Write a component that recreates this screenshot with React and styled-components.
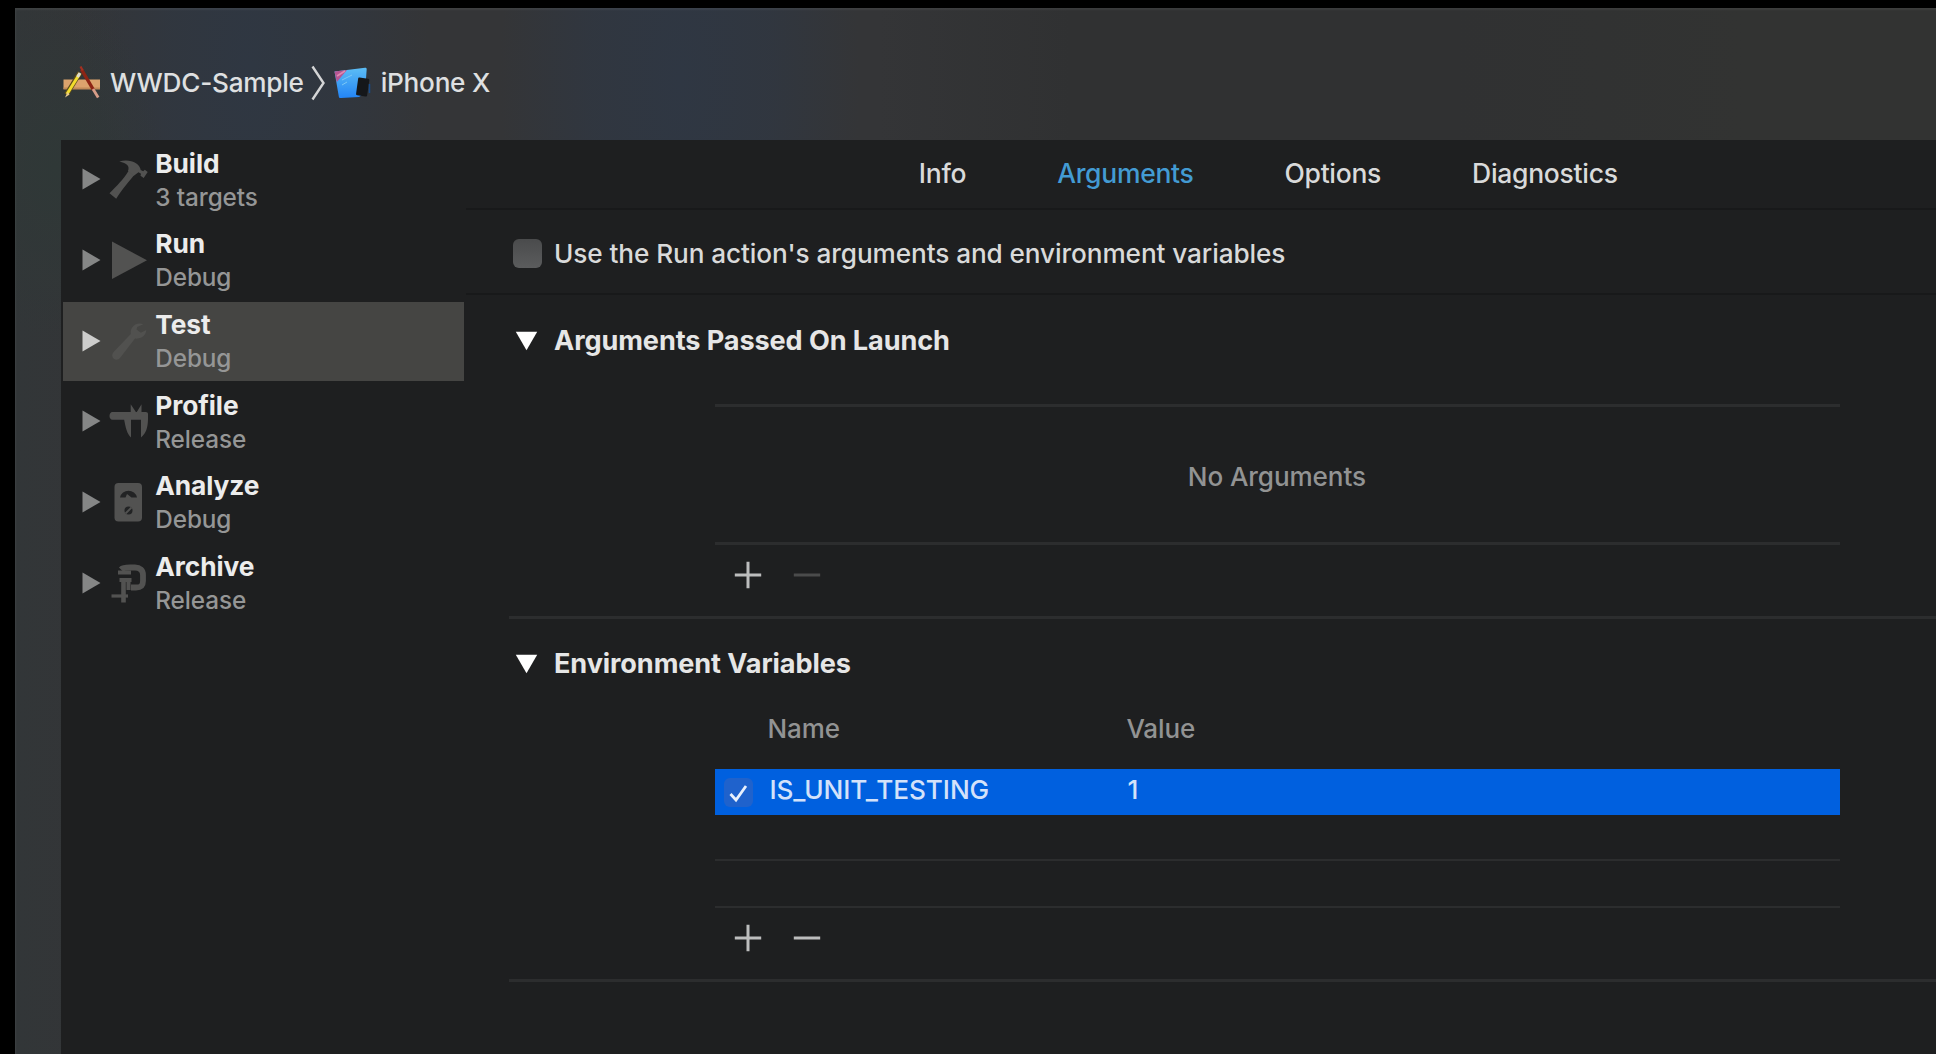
import React from "react";
import styled, { createGlobalStyle } from "styled-components";

const Global = createGlobalStyle`
  * { box-sizing: border-box; }
  body {
    margin: 0;
    background: #000;
    overflow: hidden;
    font-family: Inter, "Liberation Sans", sans-serif;
    font-weight: 500;
    letter-spacing: -0.006em;
  }
`;

const Screen = styled.div`
  width: 1936px;
  height: 1054px;
  padding: 8px 0 0 15px;
  background: #000;
`;

const SchemeWindow = styled.div`
  display: flex;
  flex-direction: column;
  height: 100%;
  box-shadow: inset 1px 2px 2px rgba(255, 255, 255, 0.06);
  background:
    radial-gradient(ellipse 110px 170px at 40px 160px, #2f3837, rgba(47, 56, 55, 0) 100%),
    radial-gradient(ellipse 180px 460px at 235px 60px, #2f3742, rgba(47, 55, 66, 0.7) 45%, rgba(47, 55, 66, 0) 100%),
    radial-gradient(ellipse 180px 460px at 665px 70px, #2f3743, rgba(47, 55, 67, 0.7) 50%, rgba(47, 55, 67, 0) 100%),
    linear-gradient(to right, #323638, #343537 6%, #343537 45%, #303132 55%, #303132 75%, #323332 90%, #323332);
`;

const Breadcrumb = styled.header`
  flex: none;
  display: flex;
  align-items: center;
  height: 132px;
  padding: 17px 0 0 48px;
`;

const Crumb = styled.span`
  margin-left: ${(p) => p.$gap}px;
  font-size: 26.2px;
  line-height: 34px;
  letter-spacing: -0.01em;
  color: #dfe0e1;
  white-space: nowrap;
`;

const CrumbChevron = styled.svg`
  width: 16px;
  height: 36px;
  margin: 0 8px 0 6px;
`;

const Body = styled.div`
  flex: 1;
  display: flex;
  min-height: 0;
  margin-left: 46px;
  background: #1e1f20;
`;

const Sidebar = styled.nav`
  flex: none;
  display: flex;
  flex-direction: column;
  gap: 1.7px;
  width: 405px;
  padding: 1px 2px 0;
`;

const Action = styled.div`
  display: flex;
  height: 79px;
  padding-left: 19px;
  background: ${(p) => (p.$selected ? "#454543" : "transparent")};
`;

const Disclosure = styled.svg`
  flex: none;
  width: 19px;
  height: 22px;
  margin-top: 27.2px;
  fill: ${(p) => (p.$selected ? "#cdcdcc" : "#858686")};
`;

const ActionIcon = styled.svg`
  flex: none;
  width: 40px;
  height: 40px;
  margin: 18.4px 0 0 7.3px;
  color: ${(p) => (p.$selected ? "#51514f" : "#525251")};
`;

const ActionText = styled.div`
  display: flex;
  flex-direction: column;
  padding: 5.5px 0 0 7px;
`;

const ActionName = styled.strong`
  font-size: 26.3px;
  line-height: 33px;
  font-weight: 650;
  color: #ececec;
`;

const ActionConfig = styled.span`
  font-size: 24.3px;
  line-height: 35px;
  color: #959696;
`;

const Main = styled.main`
  flex: 1;
  display: flex;
  flex-direction: column;
  min-width: 0;
`;

const Tabs = styled.div`
  display: flex;
  align-items: center;
  gap: 91px;
  height: 70px;
  padding: 0 0 2.5px 452.8px;
  border-bottom: 2px solid #18191a;
`;

const Tab = styled.span`
  font-size: 26.5px;
  line-height: 34px;
  letter-spacing: -0.011em;
  color: ${(p) => (p.$active ? "#439bd3" : "#d9dada")};
`;

const InheritRow = styled.label`
  display: flex;
  align-items: center;
  gap: 12px;
  height: 85px;
  padding: 4px 0 0 47px;
  border-bottom: 2px solid #18191a;
  font-size: 26.2px;
  line-height: 34px;
  color: #d9dada;
`;

const Checkbox = styled.span`
  display: flex;
  align-items: center;
  justify-content: center;
  flex: none;
  width: 29px;
  height: 29px;
  border-radius: 6px;
  background: ${(p) => (p.$checked ? "#1f62cc" : "linear-gradient(#4a4b4c, #5b5c5d)")};
`;

const Section = styled.section`
  display: flex;
  flex-direction: column;
  margin-left: 43px;
  border-bottom: 3px solid #2c2d2e;
`;

const SectionTitle = styled.h2`
  display: flex;
  align-items: center;
  gap: 16px;
  margin: 0;
  padding: ${(p) => p.$top}px 0 0 6px;
  font-size: 27.1px;
  line-height: 34px;
  font-weight: 650;
  color: #e6e6e6;
`;

const Triangle = styled.svg`
  width: 23px;
  height: 20px;
  fill: #fff;
`;

const Table = styled.div`
  display: flex;
  flex-direction: column;
  width: 1125px;
  margin-left: 206.4px;
`;

const EmptyTable = styled(Table)`
  align-items: center;
  justify-content: center;
  height: 141px;
  margin-top: 46px;
  padding: 3px 2px 0 0;
  border: solid #2c2d2e;
  border-width: 3px 0;
  font-size: 26.1px;
  color: #929393;
`;

const columns = `
  display: grid;
  grid-template-columns: 8.5px 43.5px 359px 1fr;
  align-items: center;
`;

const HeadRow = styled.div`
  ${columns}
  height: 88px;
  padding-top: 7px;
  font-size: 26px;
  line-height: 34px;
  color: #929393;
`;

const VariableRow = styled.div`
  ${columns}
  height: 46px;
  background: #0060df;
  font-size: 26.2px;
  line-height: 34px;
  color: #d3e2fa;
`;

const Cell = styled.span`
  grid-column: ${(p) => p.$column};
  padding: 0 0 ${(p) => (p.$raised ? 4 : 0)}px ${(p) => p.$inset || 0}px;
`;

const CheckCell = styled.span`
  grid-column: 2;
`;

const BlankRow = styled.div`
  height: ${(p) => p.$height}px;
  border-bottom: 2px solid #2c2d2e;
`;

const Tools = styled.div`
  display: flex;
  align-items: center;
  gap: 31px;
  height: 71px;
  margin-left: 225px;
  padding-bottom: 12px;
`;

const ToolIcon = styled.svg`
  width: 28px;
  height: 28px;
  stroke: ${(p) => (p.$disabled ? "#4a4b4b" : "#bcbdbd")};
  stroke-width: 3;
`;

const Plus = () => (
  <ToolIcon viewBox="0 0 28 28"><path d="M.8 14h26.4M14 .8v26.4" /></ToolIcon>
);
const Minus = ({ disabled }) => (
  <ToolIcon viewBox="0 0 28 28" $disabled={disabled}><path d="M.8 14h26.4" /></ToolIcon>
);

const ProjectIcon = () => (
  <svg width="38" height="34" viewBox="0 0 38 34">
    <path d="M.5 13.500h36.500v9.500h-36.500z" fill="#dca36d" />
    <path d="M.5 21.500h36.500v2h-36.500z" fill="#c08a58" />
    <path d="M17 6.500 3.500 28.500" stroke="#5d4c1c" strokeWidth="5" />
    <path d="M16.500 8 4 28" stroke="#f2dc2c" strokeWidth="3" />
    <path d="m14.500 11 2.500-4" stroke="#dddacb" strokeWidth="3" />
    <path d="m4.500 26-2.500 5.500 4.500-3z" fill="#e8c98d" />
    <path d="m18.500 3.500 12 20.500" stroke="#8d2414" strokeWidth="3.400" />
    <path d="m17.500 .5 2.200 4" stroke="#a53020" strokeWidth="2.200" />
    <path d="m30 23 5.200 8.500" stroke="#d69c88" strokeWidth="2.800" />
  </svg>
);

const DeviceIcon = () => (
  <svg width="37" height="32" viewBox="0 0 37 32">
    <defs>
      <linearGradient id="screen" x1="0" y1="0" x2="0" y2="1">
        <stop offset="0" stopColor="#5cbdf5" />
        <stop offset="1" stopColor="#2384f5" />
      </linearGradient>
    </defs>
    <path d="M.5 4.500 31 .8c1-.1 1.600.4 1.700 1.300L31 26 25 30 7 31c-1.500.1-2-.4-2.200-1.500z" fill="url(#screen)" />
    <path d="M.5 4.500 13 3 2.800 15z" fill="#b55592" />
    <path d="m3 9 8-5" stroke="#dd8bb0" strokeWidth="1.500" />
    <path d="m8 13 10-5M8 18l5-3" stroke="#7cc8f5" strokeWidth="1" />
    <path d="m25.500 10.500 8.500 1.200c1 .2 1.400.8 1.300 1.700l-2.100 14.500c-.2 1.200-.8 1.700-1.900 1.500l-8-1.200c-1-.2-1.400-.8-1.200-1.800l2-14.500c.1-1 .600-1.500 1.400-1.400z" fill="#15171a" />
    <path d="M35.500 17v9" stroke="#174c8c" strokeWidth="1.500" />
  </svg>
);

const drawings = {
  build: (
    <g fill="currentColor">
      <path d="M1.500 34.300 8.200 39.700C13 32 18 26 25.800 16.500L20.500 12C15 21 9 26.500 1.500 34.300z" />
      <path d="M11.300 2.500C17 .6 23.500 1.300 28 4.300c3 2 4.300 4.200 4.700 6.700l2.500 1.300 1.600-1.600 2.900 2.300-4 6-3.200-2.200.5-2-2.500-1.500-5 3.700L20 12c2-4.600-1-8-8.700-9.500z" />
    </g>
  ),
  run: <path d="M4 1.500 39 20.300 4 39z" fill="currentColor" />,
  test: (
    <path
      d="M35.300 3.300c-4-1.700-9-.3-11.300 3.500-1.300 2.200-1.500 4.200-1.200 6.300L5.600 31c-2 2.300-1.800 5 .2 6.700 2 1.600 4.600 1.300 6.400-.9L27 17.600c4.500.3 8-1.200 10-4.300.8-1.300 1.200-2.700 1.300-4.200l-5.500 2.700-4.300-3.200.7-2.600z"
      fill="currentColor"
    />
  ),
  profile: (
    <g fill="currentColor">
      <path d="M4.500 11h33.300c1.300 0 2.200.8 2.200 2v5.700H4.500C2.500 18.700 1.500 17 1.500 15c0-2.300 1-4 3-4z" />
      <path d="M22.700 3.300v8.200h5.500zM33.500 3.300v8.200H28.500z" />
      <path d="M16 18h7v18.500c-4-4-5.200-9-7-18.500zM33 18h7c-.2 9-1.800 14-7 18.500z" />
    </g>
  ),
  analyze: (
    <g>
      <rect x="6.500" y="1" width="27.500" height="38.500" rx="4" fill="currentColor" />
      <path d="M12 15.500a8.700 8.700 0 0 1 17 0h-5.500l-4.500-3.500-1.500 3.500z" fill="#222324" />
      <circle cx="20.500" cy="28.500" r="4" fill="#222324" />
      <path d="m17.500 31.500 6-6" stroke="currentColor" strokeWidth="1.800" />
    </g>
  ),
  archive: (
    <g fill="none" stroke="currentColor">
      <path d="M13 6.500C15 4.500 18 4.500 22 4.500h5c5 0 8 2.500 8 7.500v6c0 5-2.500 6.500-7 6.500h-5" strokeWidth="5.800" />
      <path d="M10 9.500h13M11.500 17h12" strokeWidth="3.800" />
      <path d="M15.500 17v22.500" strokeWidth="4.600" />
      <path d="M20.500 17v10" strokeWidth="4" />
      <path d="M3.500 33h16.500" strokeWidth="3.200" />
    </g>
  ),
};

const actions = [
  { icon: "build", name: "Build", config: "3 targets" },
  { icon: "run", name: "Run", config: "Debug" },
  { icon: "test", name: "Test", config: "Debug", selected: true },
  { icon: "profile", name: "Profile", config: "Release" },
  { icon: "analyze", name: "Analyze", config: "Debug" },
  { icon: "archive", name: "Archive", config: "Release" },
];

const tabs = ["Info", "Arguments", "Options", "Diagnostics"];

const Heading = ({ top, children }) => (
  <SectionTitle $top={top}>
    <Triangle viewBox="0 0 23 20"><path d="M.8.800h21.400L11.500 19.200z" /></Triangle>
    {children}
  </SectionTitle>
);

export default function App() {
  return (
    <Screen>
      <Global />
      <SchemeWindow>
        <Breadcrumb>
          <ProjectIcon />
          <Crumb $gap={9}>WWDC-Sample</Crumb>
          <CrumbChevron viewBox="0 0 16 36" fill="none" stroke="#d4d5d6" strokeWidth="2.400">
            <path d="M2.500 1.500 13.500 18 2.500 34.500" />
          </CrumbChevron>
          <DeviceIcon />
          <Crumb $gap={10}>iPhone X</Crumb>
        </Breadcrumb>
        <Body>
          <Sidebar>
            {actions.map((a) => (
              <Action key={a.name} $selected={a.selected}>
                <Disclosure viewBox="0 0 19 22" $selected={a.selected}>
                  <path d="M.5.500 18.500 11 .5 21.500z" />
                </Disclosure>
                <ActionIcon viewBox="0 0 40 40" $selected={a.selected}>{drawings[a.icon]}</ActionIcon>
                <ActionText>
                  <ActionName>{a.name}</ActionName>
                  <ActionConfig>{a.config}</ActionConfig>
                </ActionText>
              </Action>
            ))}
          </Sidebar>
          <Main>
            <Tabs>
              {tabs.map((t) => (
                <Tab key={t} $active={t === "Arguments"}>{t}</Tab>
              ))}
            </Tabs>
            <InheritRow>
              <Checkbox />
              Use the Run action's arguments and environment variables
            </InheritRow>
            <Section>
              <Heading top={29}>Arguments Passed On Launch</Heading>
              <EmptyTable>No Arguments</EmptyTable>
              <Tools>
                <Plus />
                <Minus disabled />
              </Tools>
            </Section>
            <Section>
              <Heading top={28}>Environment Variables</Heading>
              <Table>
                <HeadRow>
                  <Cell $column={3}>Name</Cell>
                  <Cell $column={4}>Value</Cell>
                </HeadRow>
                <VariableRow>
                  <CheckCell>
                    <Checkbox $checked>
                      <svg width="21" height="21" viewBox="0 0 21 21" fill="none" stroke="#e8f0fd" strokeWidth="2.800">
                        <path d="m2.500 12 5.500 6L18 4" />
                      </svg>
                    </Checkbox>
                  </CheckCell>
                  <Cell $column={3} $raised $inset={2}>IS_UNIT_TESTING</Cell>
                  <Cell $column={4} $raised $inset={1}>1</Cell>
                </VariableRow>
                <BlankRow $height={46} />
                <BlankRow $height={47} />
              </Table>
              <Tools>
                <Plus />
                <Minus />
              </Tools>
            </Section>
          </Main>
        </Body>
      </SchemeWindow>
    </Screen>
  );
}
